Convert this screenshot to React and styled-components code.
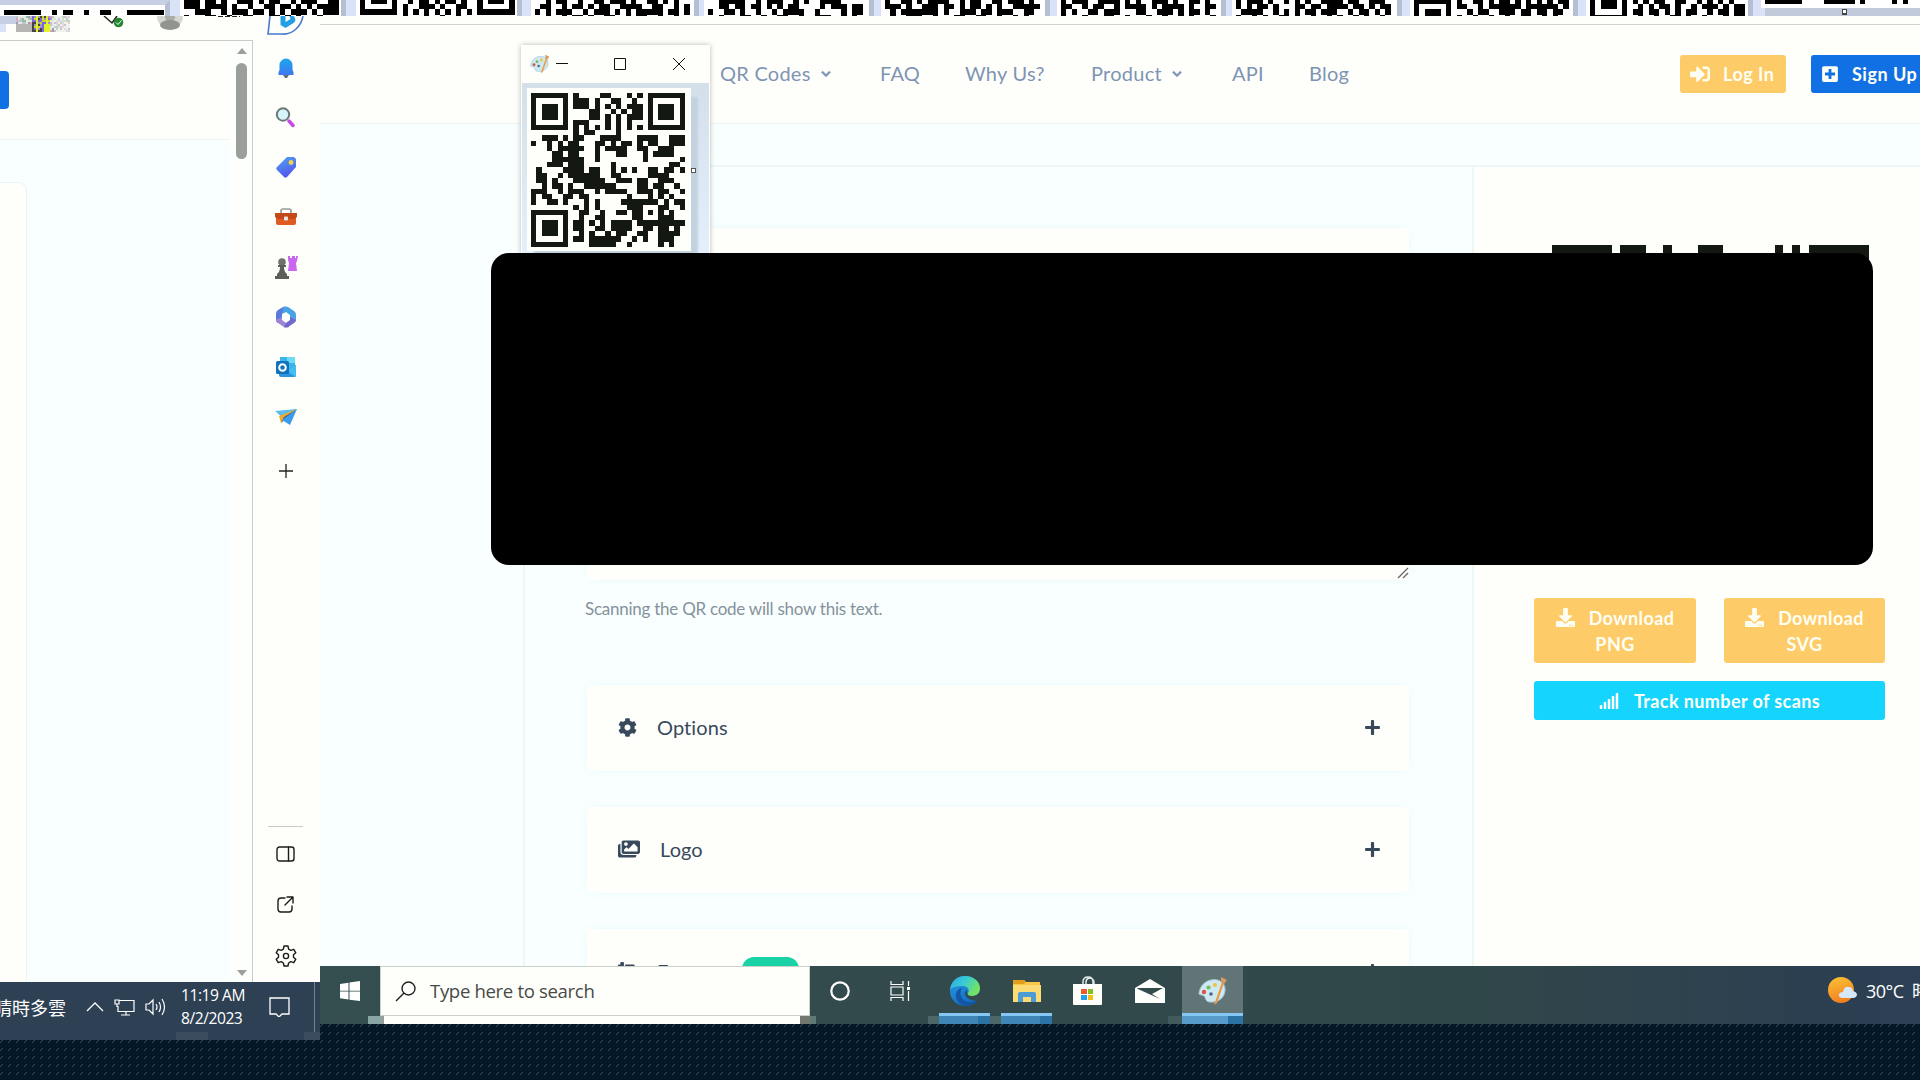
import React from "react";
import styled, { createGlobalStyle } from "styled-components";
import { FaSignInAlt, FaPlusSquare, FaDownload, FaSignal, FaCog, FaImages, FaPlus, FaChevronDown, FaCropAlt } from "react-icons/fa";

const Global = createGlobalStyle`
  * { box-sizing: border-box; }
  html, body { margin: 0; width: 1920px; height: 1080px; overflow: hidden; background: #051828; }
  svg { display: block; flex: none; }
`;

const web = `Lato, "Open Sans", sans-serif`;
const sys = `"Open Sans", "Noto Sans", "Noto Sans CJK TC", sans-serif`;

const Desktop = styled.div`
  position: relative;
  width: 1920px;
  height: 1080px;
  overflow: hidden;
  display: flex;
  flex-direction: column;
  background-color: #051828;
  background-size: 8px 8px;
  background-image:
    conic-gradient(from 270deg at 1px 1px, #3c4c61 90deg, transparent 0),
    conic-gradient(from 270deg at 1px 1px, #3c4c61 90deg, transparent 0),
    conic-gradient(from 270deg at 1px 1px, #3c4c61 90deg, transparent 0);
  background-position: 0 2px, 1px 1px, 2px 0;
`;
const Strip = styled.div`
  display: flex;
  flex: none;
  height: 16px;
  overflow: hidden;
  background: #fff;
`;
const Thumb = styled.div`
  flex: none;
  width: ${(p) => p.$w}px;
  height: 16px;
  overflow: hidden;
  background: #fff;
  border-left: ${(p) => p.$l || 0}px solid #d9e2f7;
  border-right: 5px solid #b4bfd3;
  border-top: ${(p) => p.$t || 0}px solid #c6cfe3;
  padding-left: ${(p) => p.$pad || 4}px;
`;
const Screens = styled.div`
  display: flex;
  align-items: flex-start;
`;
const Left = styled.div`
  flex: none;
  width: 320px;
  height: 1024px;
  display: flex;
  flex-direction: column;
  background: #fefffb;
`;
const LeftBody = styled.div`
  display: flex;
  height: 966px;
`;
const Browser = styled.div`
  width: 253px;
  display: flex;
  flex-direction: column;
`;
const Tools = styled.div`
  height: 24px;
  flex: none;
`;
const Viewport = styled.div`
  flex: 1;
  display: flex;
  border-top: 1px solid #c9ccc8;
  border-right: 1px solid #c9ccc8;
`;
const Page = styled.div`
  width: 229px;
  display: flex;
  flex-direction: column;
  background: #f9fffe;
`;
const PageHead = styled.div`
  height: 99px;
  padding-top: 30px;
  background: #fefffb;
  border-bottom: 1px solid #eef3f1;
`;
const BlueTab = styled.div`
  width: 9px;
  height: 38px;
  border-radius: 0 4px 4px 0;
  background: #1170e4;
`;
const PageCard = styled.div`
  width: 27px;
  flex: 1;
  margin-top: 42px;
  background: #fefffb;
  border: 1px solid #e8f4f6;
  border-width: 1px 1px 0 0;
  border-radius: 0 9px 0 0;
`;
const Scroll = styled.div`
  flex: 1;
  display: flex;
  flex-direction: column;
  align-items: center;
  justify-content: space-between;
  padding: 7px 0 6px 2px;
  background: #fcfffc;
`;
const ScrollTop = styled.div`
  display: flex;
  flex-direction: column;
  align-items: center;
  gap: 9px;
`;
const ScrollThumb = styled.div`
  width: 11px;
  height: 96px;
  border-radius: 6px;
  background: #9b9f9a;
`;
const Arrow = styled.div`
  width: 0;
  height: 0;
  border: 5px solid transparent;
  border-top-width: ${(p) => (p.$down ? 6 : 0)}px;
  border-bottom-width: ${(p) => (p.$down ? 0 : 6)}px;
  border-${(p) => (p.$down ? "top" : "bottom")}-color: #9b9f9a;
`;
const EdgeBar = styled.div`
  width: 67px;
  display: flex;
  flex-direction: column;
  align-items: center;
  padding-right: 2px;
  background: #fefffb;
`;
const EdgeSlot = styled.div`
  width: 40px;
  height: ${(p) => p.$h || 50}px;
  padding-top: ${(p) => p.$pt || 0}px;
  display: flex;
  align-items: center;
  justify-content: center;
`;
const EdgeRule = styled.div`
  width: 35px;
  height: 1px;
  margin: auto 0 2px;
  background: #c9ccc8;
`;
const TrayBar = styled.div`
  position: relative;
  height: 58px;
  flex: none;
  display: flex;
  align-items: center;
  color: #fff;
  font: 17px/23px ${sys};
  background: #2e4053;
  padding-bottom: 8px;
  overflow: hidden;
`;
const Weather = styled.div`
  width: 68px;
  direction: rtl;
  white-space: nowrap;
  overflow: hidden;
  font-family: "Noto Sans CJK TC", sans-serif;
  font-size: 18px;
  padding-right: 2px;
`;
const TrayIcons = styled.div`
  display: flex;
  align-items: center;
  gap: 10px;
  margin-left: 18px;
`;
const Clock = styled.div`
  width: 62px;
  margin-left: 15px;
  font-size: 15.6px;
  letter-spacing: -0.45px;
  white-space: nowrap;
`;
const ShowDesk = styled.div`
  align-self: stretch;
  margin: 0 5px 0 auto;
  width: 1px;
  background: #76848f;
`;
const Smear = styled.div`
  position: absolute;
  bottom: 0;
  left: ${(p) => p.$x}px;
  width: ${(p) => p.$w}px;
  height: 8px;
  background: ${(p) => p.$c};
`;

const Main = styled.div`
  flex: none;
  width: 1600px;
  height: 1008px;
  display: flex;
  flex-direction: column;
  background: linear-gradient(#fefffb 8px, #f9fffe 8px);
`;
const Header = styled.div`
  height: 100px;
  margin-top: 8px;
  flex: none;
  display: flex;
  align-items: center;
  background: #fefffb;
  border-top: 1px solid #cfd2ce;
  border-bottom: 1px solid #ecf3f0;
`;
const Nav = styled.nav`
  width: 1360px;
  padding: 0 0 2px 400px;
  display: flex;
  color: #7e94b4;
  font: 20px/26px ${web};
  letter-spacing: 0.25px;
`;
const NavItem = styled.div`
  width: ${(p) => p.$w}px;
  display: flex;
  align-items: center;
  gap: ${(p) => p.$gap || 9}px;
  white-space: nowrap;
`;
const Caret = styled(FaChevronDown)`
  width: 10px;
  height: 10px;
  margin-top: 2px;
  stroke: currentColor;
  stroke-width: 40px;
`;
const Button = styled.div`
  flex: none;
  width: ${(p) => p.$w}px;
  height: 38px;
  display: flex;
  align-items: center;
  padding-left: 10px;
  gap: 13px;
  border-radius: 3px;
  color: #fefff4;
  background: ${(p) => p.$bg};
  font: bold 18px/26px ${web};
  letter-spacing: 0.5px;
  white-space: nowrap;
`;
const Actions = styled.div`
  display: flex;
  gap: 25px;
  width: 240px;
  overflow: hidden;
`;
const Content = styled.div`
  flex: 1;
  min-height: 0;
  overflow: hidden;
  display: flex;
  margin-top: 41px;
  padding-left: 203px;
`;
const Form = styled.div`
  width: 949px;
  border-left: 2px solid #edf7f8;
  border-top: 2px solid #edf7f8;
  padding: 61px 0 0 62px;
`;
const Card = styled.div`
  width: 822px;
  height: 86px;
  margin-bottom: 36px;
  background: #fefffb;
  border-radius: 4px;
  box-shadow: 0 0 8px rgba(235, 250, 255, 0.9);
  display: flex;
  align-items: center;
  padding: 0 28px 2px 31px;
  color: #39495c;
  font: 20px/26px ${web};
`;
const TextCard = styled(Card)`
  height: 352px;
  margin-bottom: 18px;
  align-items: flex-end;
  justify-content: flex-end;
  padding: 0 0 1px;
`;
const Hint = styled.div`
  height: 22px;
  margin: 0 0 65px -2px;
  color: #85929c;
  font: 17px/22px ${web};
  letter-spacing: -0.25px;
`;
const CardTitle = styled.div`
  flex: ${(p) => (p.$w ? "none" : 1)};
  width: ${(p) => (p.$w ? `${p.$w}px` : "auto")};
  margin-left: ${(p) => p.$ml}px;
  letter-spacing: 0.1px;
`;
const NewTag = styled.div`
  width: 57px;
  height: 28px;
  margin-right: auto;
  border-radius: 12px;
  background: #19d3a6;
`;
const Side = styled.div`
  flex: 1;
  border-top: 2px solid #edf7f8;
  border-left: 2px solid #edf7f8;
  background: #fefffb;
  padding: 78px 0 0 60px;
`;
const CodeBox = styled.div`
  height: 353px;
  padding-left: 18px;
`;
const Downloads = styled.div`
  display: flex;
  gap: 28px;
  margin-bottom: 18px;
`;
const Big = styled.div`
  width: ${(p) => p.$w}px;
  height: ${(p) => p.$h}px;
  border-radius: 3px;
  background: ${(p) => p.$bg};
  color: #fefff4;
  font: bold 18px/26px ${web};
  letter-spacing: 0.4px;
  display: flex;
  flex-direction: column;
  align-items: center;
  justify-content: center;
`;
const Line = styled.div`
  display: flex;
  align-items: center;
  gap: ${(p) => p.$gap}px;
`;
const Taskbar = styled.div`
  position: relative;
  height: 58px;
  flex: none;
  display: flex;
  background: linear-gradient(90deg, #354e4f 0, #304749 1150px, #2d4050 1450px, #2c3f54 1600px);
  color: #fff;
  overflow: hidden;
  font: 18px/24px ${sys};
`;
const Slot = styled.div`
  width: ${(p) => p.$w}px;
  margin-right: ${(p) => p.$mr || 0}px;
  height: 50px;
  display: flex;
  align-items: center;
  justify-content: center;
`;
const Search = styled.div`
  width: 430px;
  height: 50px;
  border: 1px solid #cbd2ca;
  background: #fefffb;
  display: flex;
  align-items: center;
  gap: 14px;
  padding-left: 14px;
  color: #474a47;
  font-size: 18.6px;
  letter-spacing: -0.35px;
`;
const AppSlot = styled.div`
  width: ${(p) => p.$w}px;
  margin-right: ${(p) => p.$mr || 0}px;
  height: 58px;
  display: flex;
  flex-direction: column;
  align-items: center;
  background: ${(p) => (p.$active ? "#617476" : "transparent")};
`;
const AppIcon = styled.div`
  height: 47px;
  display: flex;
  align-items: center;
  padding-top: 3px;
`;
const Under = styled.div`
  width: 100%;
  height: 11px;
  border-top: 3px solid #86c6f3;
  background: linear-gradient(90deg, ${(p) => (p.$light ? "#579bcb" : "#3f85b5")} 76%, #2b73a5 76%);
`;
const Temp = styled.div`
  margin-left: auto;
  width: 92px;
  height: 50px;
  display: flex;
  align-items: center;
  gap: 9px;
  white-space: nowrap;
  overflow: hidden;
  letter-spacing: -0.5px;
`;
const PaintWindow = styled.div`
  position: absolute;
  left: 521px;
  top: 45px;
  width: 189px;
  height: 215px;
  background: #fefffb;
  box-shadow: 0 0 5px rgba(0, 0, 0, 0.28);
  padding: 0 1px;
`;
const PaintTitle = styled.div`
  height: 38px;
  display: flex;
  align-items: center;
  padding-left: 8px;
`;
const PaintArea = styled.div`
  height: 177px;
  padding: 5px 0 0 5px;
  display: flex;
  background: linear-gradient(#d3e0ea, #e4f1fc);
`;
const Canvas = styled.div`
  width: 164px;
  height: 163px;
  padding: 5px 0 0 4px;
  background: #fefffb;
  box-shadow: 7px 9px 2px #c4d2df;
`;
const Handle = styled.div`
  width: 5px;
  height: 5px;
  margin-top: 80px;
  border: 1px solid #555;
  background: #fff;
`;
const Redaction = styled.div`
  position: absolute;
  left: 491px;
  top: 253px;
  width: 1382px;
  height: 312px;
  border-radius: 18px;
  background: #000;
`;

function Bitmap({ rows, m, h = m, y = 0, color = "#131813" }) {
  let d = "";
  rows.forEach((r, j) => {
    for (const run of r.matchAll(/#+/g)) {
      d += `M${(run.index * m).toFixed(2)} ${(y + j * h).toFixed(2)}h${(run[0].length * m).toFixed(2)}v${h}h-${(run[0].length * m).toFixed(2)}z`;
    }
  });
  return (
    <svg width={rows[0].length * m} height={Math.max(1, y + rows.length * h)} shapeRendering="crispEdges">
      <path d={d} fill={color} />
    </svg>
  );
}

const code = [
  "#######.#....##...#.#.#######",
  "#.....#.###.#..##..#..#.....#",
  "#.###.#.###.#.#.#.###.#.###.#",
  "#.###.#....##..#.#.##.#.###.#",
  "#.###.#....##.#.#.###.#.###.#",
  "#.....#.###...#.#.#...#.....#",
  "#######.#.#.#.#.#.#.#.#######",
  "........#.##....#............",
  "..###.#.##...####...####..###",
  "#..#.#.##...##.#.##.#.##..###",
  "...#.#####..#.####..##..###..",
  "....##.##...#...##...#.####..",
  "....######..#........#......#",
  "...###.###.....#..........##.",
  ".#....####.##..#.#.#..##.##.#",
  ".##..#.######..##.....####...",
  ".##.#...######..###.##..###..",
  "..#.##.#..######....##.##..#.",
  "###..#.###..#.####..###.##..#",
  "#.##..##.##.......#...#.#.#..",
  "#..##.#...#.#....#######.#.##",
  "........#.#.#.....###...##..#",
  "#######..##..#..##.##.#.#.#..",
  "#.....#..#..##.....##...###..",
  "#.###.#.##.#.#.####.#########",
  "#.###.#.##..##.####..##.##.#.",
  "#.###.#..#.#..#.##..##..####.",
  "#.....#.##.######..#.#..###..",
  "#######....#####..#.....#.#..",
];

const thumbs = [
  { w: 170, t: 5, y: 5, rows: ["#######..#.##..#..##...#######"] },
  { w: 176, l: 10, rows: ["###.##.#..###.#.##..#.###..##", "###.####.#..#..##.##.#.#.####", "..###..#.###.##.#.#.###.#.###", "#...##..#..##...##.#.#...#..."] },
  { w: 176, l: 10, rows: ["#.###.#..#.##.#.##.#..#.###.#", "#.....#.#..###.#..##..#.....#", "#######.#.#.#.#.#.#.#.#######", "........#...#..#..#.........."] },
  { w: 177, l: 9, rows: ["..#.##..#..##.###.#..##.#.#..", ".##..#.##.#.##..####..##..#.#", "#.#.###..#.###.#.#.#####.##.#", "..#..#.##.#..##..#.##..#..#.."] },
  { w: 175, l: 5, rows: ["..#####..#.###..#.#..####....", "..##.##.##.#.#.##....#.###.##", "#..##.#..#..#.####..#....#.##", "..#...##..#..##..#..###..#.#."] },
  { w: 176, l: 7, rows: ["#..##.#.####..#.##..##.###.#.", "###.#..###.##.#.##.#.#..#####", ".#.#######.#..###.##.###..##.", ".#..###..#...##..##..#..#.#.."] },
  { w: 176, l: 7, rows: ["#.###..####.#.#..###.#..##.#.", "##..#.##..#.####.#.####.#..##", "#.#..##.###...##..###.#.##.#.", "#...#...##..#...#..#..#.#...#"] },
  { w: 176, l: 6, rows: ["#.###.#..#.#.#..####.##..###.", "#.#.##.#...##.##.####.##.#.##", ".####..#.#.#.##.###..#.##.#.#", "#..#.#..##.#..#..#.#..#.#..#."] },
  { w: 176, l: 8, rows: ["#######.#..##.#.##.#.#.#.#.##", "#.....#.##..#.######.######.#", "#.###.#...#.##..###.##.##.##.", "#.###.#.#..#..#..#..##..#.#.."] },
  { w: 175, l: 8, rows: ["#.###.#.#.#.##..##..#.#.#.#..", "#.###.#..#.#.##.#..#.###.#.##", "#.....#.##.##.#.#.##..#.##.##", "#######..#..#..##.#..#...#.##"] },
];

const S = ({ w = 24, h = w, vb = "0 0 24 24", children }) => (
  <svg width={w} height={h} viewBox={vb} fill="none">{children}</svg>
);

const Bing = () => (
  <svg width="40" height="20" viewBox="0 0 40 20" fill="none">
    <path d="M4 0L2 18q8 0 14 0c10 1 19-7 21-18" stroke="#4a78d0" strokeWidth="1.6" />
    <path d="M14.500 0v9l5 3 8-5c3-2 2-5 0-7h-4l1 3-5 3V0z" fill="#249fe6" />
  </svg>
);
const Bell = () => (
  <S w={20} h={22} vb="0 0 20 22">
    <defs><linearGradient id="bell" x2="0" y2="1"><stop stopColor="#1ca8ee" /><stop offset="1" stopColor="#3f78ef" /></linearGradient></defs>
    <path d="M7 18h6l-2 3H9z" fill="#667078" />
    <path d="M2.500 18V15L3.500 13V8a6.500 6.500 0 0113 0v5l1 2v3z" fill="url(#bell)" />
  </S>
);
const Glass = () => (
  <S w={22} vb="0 0 22 22">
    <path d="M14 15l4 4.500" stroke="#c649e8" strokeWidth="3.500" strokeLinecap="round" />
    <circle cx="8" cy="8.500" r="6.200" fill="#d4f3fb" stroke="#6f7775" strokeWidth="2" />
  </S>
);
const Tag = () => (
  <S w={22} vb="0 0 22 22">
    <defs><linearGradient id="tag" x2="0.400" y2="1"><stop stopColor="#51a5ee" /><stop offset="1" stopColor="#5357ee" /></linearGradient></defs>
    <path d="M12 1h7l2 2v8L12 21c-1 1-2 1-3 0l-7-7c-1-1-1-2 0-3z" fill="url(#tag)" />
    <circle cx="16" cy="6.500" r="2.400" fill="#f6d34b" />
  </S>
);
const Box = () => (
  <S w={24} h={18} vb="0 0 24 18">
    <path d="M7 6V3q0-2 2-2h6q2 0 2 2v3" stroke="#969b98" strokeWidth="1.700" />
    <path d="M2 9h20v6q0 2-2 2H4q-2 0-2-2z" fill="#e05a24" />
    <path d="M1 5h22v4l-3 2H4L1 9z" fill="#c44918" />
    <rect x="10" y="8.500" width="4" height="4" rx="1" fill="#e5e6e2" />
  </S>
);
const Chess = () => (
  <S w={24} h={24} vb="0 0 24 24">
    <path d="M14 1h2v2h2V1h3v2h1V1h2l-1 5-1 2 1 8h-9l1-8-1-3z" fill="#c968ee" />
    <circle cx="8" cy="7" r="3.800" fill="#6d706c" />
    <path d="M4 10h8v2h-2q0 5 3 7v2h2v3H1v-3h2v-2q3-2 3-7H4z" fill="#5c605b" />
  </S>
);
const M365 = () => (
  <S w={22} vb="0 0 22 22">
    <path d="M1 8q0-3 2-4l5-3q2-1 3 0L7 8v7l-4 2q-2-1-2-4z" fill="#5b78dc" />
    <path d="M9 1q2-1 4 0l6 4q2 1 2 4v6l-6-3V9l-4-3-4 2 1-6z" fill="#48a3e4" />
    <path d="M1 14l6-3v3l4 3 3-1v5q-2 1-5 0l-6-4q-2-1-2-3z" fill="#a085d4" />
    <path d="M15 11l6 3q0 2-2 3l-6 4-4 .500L11 17l4-3z" fill="#7068cc" />
    <circle cx="11" cy="11.300" r="3.700" fill="#fff" />
  </S>
);
const Outlook = () => (
  <S w={22} vb="0 0 22 22">
    <path d="M5 1h15v13H5z" fill="#39b5ea" /><path d="M12 1h8v6h-8z" fill="#6ddaf6" />
    <path d="M4 9l9 5 8-5v10q0 2-2 2H6q-2 0-2-2z" fill="#2a95dc" /><path d="M21 9v12L11 15z" fill="#42bdf0" />
    <rect x="1" y="5" width="13" height="13" rx="1.500" fill="#1072bd" />
    <circle cx="7.500" cy="11.500" r="3.300" stroke="#fff" strokeWidth="2" />
  </S>
);
const Plane = () => (
  <S w={22} h={18} vb="0 0 22 18">
    <path d="M0 3L22 1 9 11z" fill="#5abdf0" /><path d="M22 1L4 8l2 7z" fill="#f1a92b" />
    <path d="M22 1L9 9l-3 6 3-3z" fill="#385e90" /><path d="M22 1l-7 16-8-5z" fill="#3e9aea" />
  </S>
);
const ink = { stroke: "#1b1d1b", strokeWidth: 1.4, strokeLinecap: "round", strokeLinejoin: "round" };
const Gear = () => (
  <S w={22} vb="0 0 22 22">
    <path {...ink} d="M9 1h4l.6 3.100 2.200 1.200 3-1 2 3.500-2.300 2v2.400l2.300 2-2 3.500-3-1-2.200 1.300L13 21H9l-.6-3L6.200 16.700l-3 1-2-3.500 2.300-2V9.800l-2.300-2 2-3.500 3 1 2.200-1.200z" />
    <circle {...ink} cx="11" cy="11" r="2.600" />
  </S>
);
const Palette = ({ w }) => (
  <S w={w} h={w} vb="0 0 30 30">
    <path d="M13 4c9-2 15 4 14 11-1 8-8 12-16 11-4-1-3-4-5-6-3-2-5 0-5-3C2 10 7 5 13 4z" fill="#cfe9f2" stroke="#9cc4d4" strokeWidth="1" />
    <circle cx="6" cy="16" r="2.200" fill="#d8544a" /><circle cx="10.500" cy="11.500" r="2.100" fill="#6fc05c" />
    <circle cx="17" cy="9" r="2.100" fill="#f0c33a" /><circle cx="13" cy="18" r="1.800" fill="#456a80" />
    <path d="M16 29l8-23 2 1-7 20z" fill="#ea9a45" /><path d="M23 6l0-5 6 3-3 4z" fill="#d69a62" />
  </S>
);
const EdgeLogo = () => (
  <S w={30} vb="0 0 30 30">
    <defs>
      <linearGradient id="e1" x2="1" y2="0.500"><stop stopColor="#2aa8e0" /><stop offset=".5" stopColor="#38cbd6" /><stop offset="1" stopColor="#75e45e" /></linearGradient>
      <linearGradient id="e2" x2="0.600" y2="1"><stop stopColor="#279fe2" /><stop offset="1" stopColor="#1269c4" /></linearGradient>
    </defs>
    <circle cx="15" cy="15" r="15" fill="url(#e2)" />
    <path d="M0 14C1 5 7 0 15 0c9 0 15 6 15 12 0 5-3 8-8 8-4 0-5-1-4-3 2-3 0-7-5-7C7 10 1 11 0 14z" fill="url(#e1)" />
    <path d="M12 12c-4 6 0 14 8 14 4 0 6-1 8-2-3 4-7 6-12 6-7-1-11-7-10-12 1-4 4-6 6-6z" fill="#1556a4" />
    <path d="M30 15v7l-2 2c-2 1-6 1-9-1-5-3-5-7-2-9-1 4 1 6 5 6s7-2 8-5z" fill="#334b4d" />
  </S>
);
const Folder = () => (
  <S w={28} h={24} vb="0 0 28 24">
    <path d="M0 1h11l2 2h14v20H0z" fill="#f7c745" /><path d="M0 1h11l2 2-2 2H0z" fill="#e39d1e" />
    <path d="M0 6h28v17H0z" fill="#fbdb74" />
    <path d="M5 23V15q0-2 2-2h14q2 0 2 2v8h-5v-5h-8v5z" fill="#4b9bd4" />
  </S>
);
const Store = () => (
  <S w={30} h={30} vb="0 0 30 30">
    <path d="M10 9V6q0-5 5-5t5 5v3M13 9V6q0-3 3-4 5 0 5 5v2" stroke="#dfe7e5" strokeWidth="1.500" />
    <path d="M0 8h29v20q0 1-1 1H1q-1 0-1-1z" fill="#fefffb" />
    <path d="M8 13h6v5H8z" fill="#ee5a2c" /><path d="M15 13h5v5h-5z" fill="#86bf22" />
    <path d="M8 19h6v5H8z" fill="#22a3e8" /><path d="M15 19h5v5h-5z" fill="#f8bc16" />
  </S>
);
const Mail = () => (
  <S w={30} h={25} vb="0 0 30 25">
    <path d="M0 9L15 0l15 9v15H0z" fill="#fefffb" />
    <path d="M2 9h26l-11 6 8 5L3 10z" fill="#334b4d" />
  </S>
);

const NoiseColors = ["#b9b9c4", "#d98fa4", "#7fb08a", "#8f8aa8", "#c8d400", "#6a48d8", "#232323", "#a274e0", "#dfe5dc"];
function Toolbar() {
  const cells = [];
  for (let j = 0; j < 8; j++)
    for (let i = 0; i < 27; i++) {
      const k = (i * 7 + j * 11 + ((i * j) % 5)) % 9;
      const mid = i > 7 && i < 17;
      const yellow = mid && (i % 5 === 0 || (j > 3 && i > 13));
      cells.push(<rect key={`${i}-${j}`} x={16 + i * 2} y={j * 2} width="2" height="2" fill={yellow ? "#dcf000" : mid ? NoiseColors[3 + (k % 5)] : j > 3 && i < 8 ? "#a9a8a6" : NoiseColors[[0, 8, 1, 8, 0, 8, 3, 8, 2][k]]} opacity={i > 18 ? 0.5 : 0.85} />);
    }
  return (
    <svg width="252" height="24">
      <rect width="16" height="8" fill="#c6cfe3" /><rect y="8" width="6" height="8" fill="#d9e2f7" />
      {cells}
      <path d="M104 0l8 7 5-7" stroke="#222" strokeWidth="1.500" fill="none" />
      <circle cx="118.500" cy="6.500" r="4.800" fill="#24862e" /><path d="M116 6.500l2 2 3.500-4" stroke="#fff" fill="none" />
      <path d="M157 0h26a13 13 0 01-26 0z" fill="#d5d8d2" /><circle cx="170" cy="1" r="5" fill="#a9aca7" /><ellipse cx="170" cy="9" rx="10" ry="5" fill="#92958f" />
      <path d="M218 .5h22" stroke="#222" strokeDasharray="5 2" />
    </svg>
  );
}

export default function App() {
  return (
    <Desktop>
      <Global />
      <Strip>
        {thumbs.map((t, i) => (
          <Thumb key={i} $w={t.w} $l={t.l} $t={t.t}>
            <Bitmap rows={t.rows} m={5.33} y={t.y ?? -1.3} color="#000" />
          </Thumb>
        ))}
        <svg width="170" height="16">
          <rect width="170" height="16" fill="#c0cadb" /><rect width="12" height="16" fill="#d9e2f7" />
          <rect x="8" width="162" height="8" fill="#fff" />
          <path d="M12 0h37v4H12zM71 0h31v4H71zM107 0h5v4h-5zM139 0h5v4h-5zM150 0h5v4h-5z" fill="#000" />
          <rect x="89" y="9" width="5" height="6" fill="#444" /><rect x="90" y="10" width="3" height="3" fill="#fff" />
        </svg>
      </Strip>

      <Screens>
        <Left>
          <LeftBody>
            <Browser>
              <Tools><Toolbar /></Tools>
              <Viewport>
                <Page>
                  <PageHead><BlueTab /></PageHead>
                  <PageCard />
                </Page>
                <Scroll>
                  <ScrollTop><Arrow /><ScrollThumb /></ScrollTop>
                  <Arrow $down />
                </Scroll>
              </Viewport>
            </Browser>
            <EdgeBar>
              <EdgeSlot $h={20}><Bing /></EdgeSlot>
              <EdgeSlot $h={56} $pt={8}><Bell /></EdgeSlot>
              <EdgeSlot $h={50}><Glass /></EdgeSlot>
              <EdgeSlot><Tag /></EdgeSlot>
              <EdgeSlot><Box /></EdgeSlot>
              <EdgeSlot><Chess /></EdgeSlot>
              <EdgeSlot><M365 /></EdgeSlot>
              <EdgeSlot><Outlook /></EdgeSlot>
              <EdgeSlot><Plane /></EdgeSlot>
              <EdgeSlot $h={58}><S w={16} vb="0 0 16 16"><path d="M8 1v14M1 8h14" stroke="#222" strokeWidth="1.300" /></S></EdgeSlot>
              <EdgeRule />
              <EdgeSlot><S w={19} h={16} vb="0 0 19 16"><rect {...ink} x="1" y="1" width="17" height="14" rx="2.500" /><path {...ink} d="M12.500 1v14" /></S></EdgeSlot>
              <EdgeSlot><S w={17} vb="0 0 17 17"><path {...ink} d="M8 2H4Q1 2 1 5v8q0 3 3 3h8q3 0 3-3v-3M10 1h6v6M16 1L8 9" /></S></EdgeSlot>
              <EdgeSlot $h={53}><Gear /></EdgeSlot>
            </EdgeBar>
          </LeftBody>
          <TrayBar>
            <Weather>晴時多雲</Weather>
            <TrayIcons>
              <S w={18} h={10} vb="0 0 18 10"><path d="M1 9l8-8 8 8" stroke="#fff" strokeWidth="1.300" /></S>
              <S w={21} h={17} vb="0 0 21 17"><path d="M5 1.500h15v11H4V7M12 13v3M7 16h9M1 1h4v4H1zM3 5v3" stroke="#fff" strokeWidth="1.200" /></S>
              <S w={21} h={18} vb="0 0 21 18"><path d="M1 6h3l4-4v14l-4-4H1zM11 6q2 3 0 6M14 4q3 5 0 10M17 1q5 8 0 16" stroke="#fff" strokeWidth="1.200" /></S>
            </TrayIcons>
            <Clock>11:19 AM<br />8/2/2023</Clock>
            <S w={50} h={20} vb="-26 0 50 20"><path d="M1 1h19v16h-7l-3 3-3-3H1z" stroke="#fff" strokeWidth="1.300" /></S>
            <ShowDesk />
            <Smear $x={176} $w={32} $c="#3c4c5f" /><Smear $x={304} $w={16} $c="#3c4c5f" />
          </TrayBar>
        </Left>

        <Main>
          <Header>
            <Nav>
              <NavItem $w={160} $gap={10}>QR Codes<Caret /></NavItem>
              <NavItem $w={85}>FAQ</NavItem>
              <NavItem $w={126}>Why Us?</NavItem>
              <NavItem $w={141} $gap={10}>Product<Caret /></NavItem>
              <NavItem $w={77}>API</NavItem>
              <NavItem $w={60}>Blog</NavItem>
            </Nav>
            <Actions>
              <Button $w={106} $bg="#fecb69"><FaSignInAlt size={20} />Log In</Button>
              <Button $w={130} $bg="#1170e4"><FaPlusSquare size={18} />Sign Up</Button>
            </Actions>
          </Header>
          <Content>
            <Form>
              <TextCard>
                <S w={12} vb="0 0 12 12"><path d="M1 11L11 1M6 11l5-5" stroke="#666" strokeWidth="1.300" /></S>
              </TextCard>
              <Hint>Scanning the QR code will show this text.</Hint>
              <Card><FaCog size={19} /><CardTitle $ml={20}>Options</CardTitle><FaPlus size={17} /></Card>
              <Card><FaImages size={22} /><CardTitle $ml={20}>Logo</CardTitle><FaPlus size={17} /></Card>
              <Card><FaCropAlt size={19} /><CardTitle $ml={20} $w={85}>Frame</CardTitle><NewTag /><FaPlus size={17} /></Card>
            </Form>
            <Side>
              <CodeBox>
                <Bitmap rows={["#######.###..#...###......#.#.#######", "#.....#...#..#.#.#..##.##...#.#.....#"]} m={8.56} />
              </CodeBox>
              <Downloads>
                <Big $w={162} $h={65} $bg="#fecb69"><Line $gap={14}><FaDownload size={19} />Download</Line>PNG</Big>
                <Big $w={161} $h={65} $bg="#fecb69"><Line $gap={14}><FaDownload size={19} />Download</Line>SVG</Big>
              </Downloads>
              <Big $w={351} $h={39} $bg="#15d4fe"><Line $gap={15}><FaSignal size={20} />Track number of scans</Line></Big>
            </Side>
          </Content>
          <Taskbar>
            <Slot $w={60}><S w={20} vb="0 0 20 20"><path d="M0 3l8.500-1.300v8H0zM9.500 1.500L20 0v9.700H9.500zM0 10.500h8.500v8L0 17.300zM9.500 10.500H20V20L9.500 18.700z" fill="#fff" /></S></Slot>
            <Search>
              <S w={21} vb="0 0 21 21"><circle cx="13.500" cy="7.500" r="6.500" stroke="#222" strokeWidth="1.400" /><path d="M9 12L1 20" stroke="#222" strokeWidth="1.400" /></S>
              Type here to search
            </Search>
            <Slot $w={60}><S w={22} vb="0 0 22 22"><circle cx="11" cy="11" r="8.700" stroke="#fff" strokeWidth="2.200" /></S></Slot>
            <Slot $w={60} $mr={9}><S w={20} vb="0 0 20 20"><path d="M1 0v3.500h12V0M1 6h12v8H1zM1 20v-3.500h12V20M18.500 0v5M18.500 10v10" stroke="#fff" strokeWidth="1.200" /><path d="M17 6h3v3h-3z" fill="#fff" /></S></Slot>
            <AppSlot $w={51} $mr={11}><AppIcon><EdgeLogo /></AppIcon><Under /></AppSlot>
            <AppSlot $w={51} $mr={10}><AppIcon><Folder /></AppIcon><Under /></AppSlot>
            <AppSlot $w={51} $mr={11}><AppIcon><Store /></AppIcon></AppSlot>
            <AppSlot $w={51} $mr={7}><AppIcon><Mail /></AppIcon></AppSlot>
            <AppSlot $w={61} $active><AppIcon><Palette w={30} /></AppIcon><Under $light /></AppSlot>
            <Temp>
              <S w={29} h={28} vb="0 0 29 28">
                <defs><linearGradient id="sun" x2="0.300" y2="1"><stop stopColor="#fcc534" /><stop offset="1" stopColor="#f28022" /></linearGradient></defs>
                <circle cx="13" cy="13" r="13" fill="url(#sun)" />
                <path d="M14 21q-4-1-3-4 1-2 4-2 1-6 6-5 3 0 4 4 4 1 4 4-1 3-4 3z" fill="#d6e7fa" />
              </S>
              30°C&nbsp; 時
            </Temp>
            <Smear $x={48} $w={14} $c="#8aa5a6" /><Smear $x={62} $w={2} $c="#9a9c94" />
            <Smear $x={64} $w={416} $c="#fefffb" /><Smear $x={480} $w={10} $c="#737770" /><Smear $x={490} $w={6} $c="#607876" />
            <Smear $x={608} $w={11} $c="#4d6668" /><Smear $x={670} $w={11} $c="#4d6668" /><Smear $x={848} $w={14} $c="#415a5c" />
          </Taskbar>
        </Main>
      </Screens>

      <PaintWindow>
        <PaintTitle>
          <Palette w={20} />
          <svg width="150" height="20" viewBox="0 0 150 20" fill="none" stroke="#111">
            <path d="M6 9.500h12M64.500 4.500h11v11h-11zM123 4l12 12M135 4l-12 12" />
          </svg>
        </PaintTitle>
        <PaintArea>
          <Canvas><Bitmap rows={code} m={5.31} /></Canvas>
          <Handle />
        </PaintArea>
      </PaintWindow>
      <Redaction />
    </Desktop>
  );
}
